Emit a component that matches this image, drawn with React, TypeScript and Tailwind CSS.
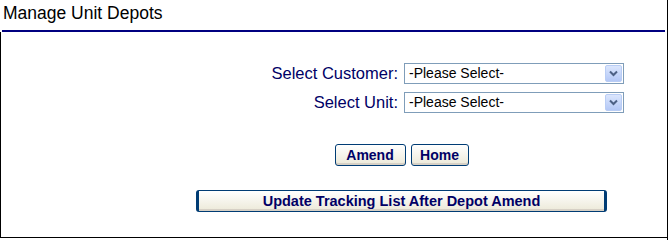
export default function App() {
  const label = "text-right text-[16.5px] leading-[21px] text-[#000066]";
  const btn =
    "h-[22px] rounded-[3px] border border-[#003c74] bg-gradient-to-b from-white to-[#ece9d8] font-bold text-[#000066] shadow-[inset_0_-2px_0_#d6d0c5]";

  return (
    <div className="h-[240px] w-[668px] border-r border-black bg-white font-['Liberation_Sans',Arial,sans-serif]">
      <div className="h-[30px] pl-[3px] pt-[2px] text-[17.5px] leading-[22px] text-black">Manage Unit Depots</div>
      <div className="mx-[2px] h-[2px] bg-[#000080]" />
      <div className="h-[206px] border-b border-l border-black pt-[31px]">
        <div className="grid grid-cols-[397px_220px] gap-x-[6px] gap-y-[8px]">
          <div className={label}>Select Customer:</div>
          <Dropdown />
          <div className={label}>Select Unit:</div>
          <Dropdown />
        </div>

        <div className="mt-[31px] flex justify-center gap-[5px] pl-[135px]">
          <button className={`${btn} w-[71px] text-[14px]`}>Amend</button>
          <button className={`${btn} w-[58px] text-[14px]`}>Home</button>
        </div>

        <div className="mt-[24px] flex justify-center pl-[135px]">
          <button className={`${btn} w-[411px] border-x-[3px] text-[14.5px]`}>Update Tracking List After Depot Amend</button>
        </div>
      </div>
    </div>
  );
}

function Dropdown() {
  return (
    <div className="flex h-[21px] w-[220px] items-center border border-[#7f9db9] bg-white">
      <span className="flex-1 pl-[4px] text-[14px] text-black">-Please Select-</span>
      <span className="mr-[1px] flex h-[17px] w-[17px] items-center justify-center rounded-[2px] border border-[#b9cdf5] bg-gradient-to-b from-[#dbe6fd] to-[#b4c8f6]">
        <svg width="9" height="7" viewBox="0 0 9 7">
          <path d="M1 1.5 L4.5 5 L8 1.5" fill="none" stroke="#4d6185" strokeWidth="2" />
        </svg>
      </span>
    </div>
  );
}
